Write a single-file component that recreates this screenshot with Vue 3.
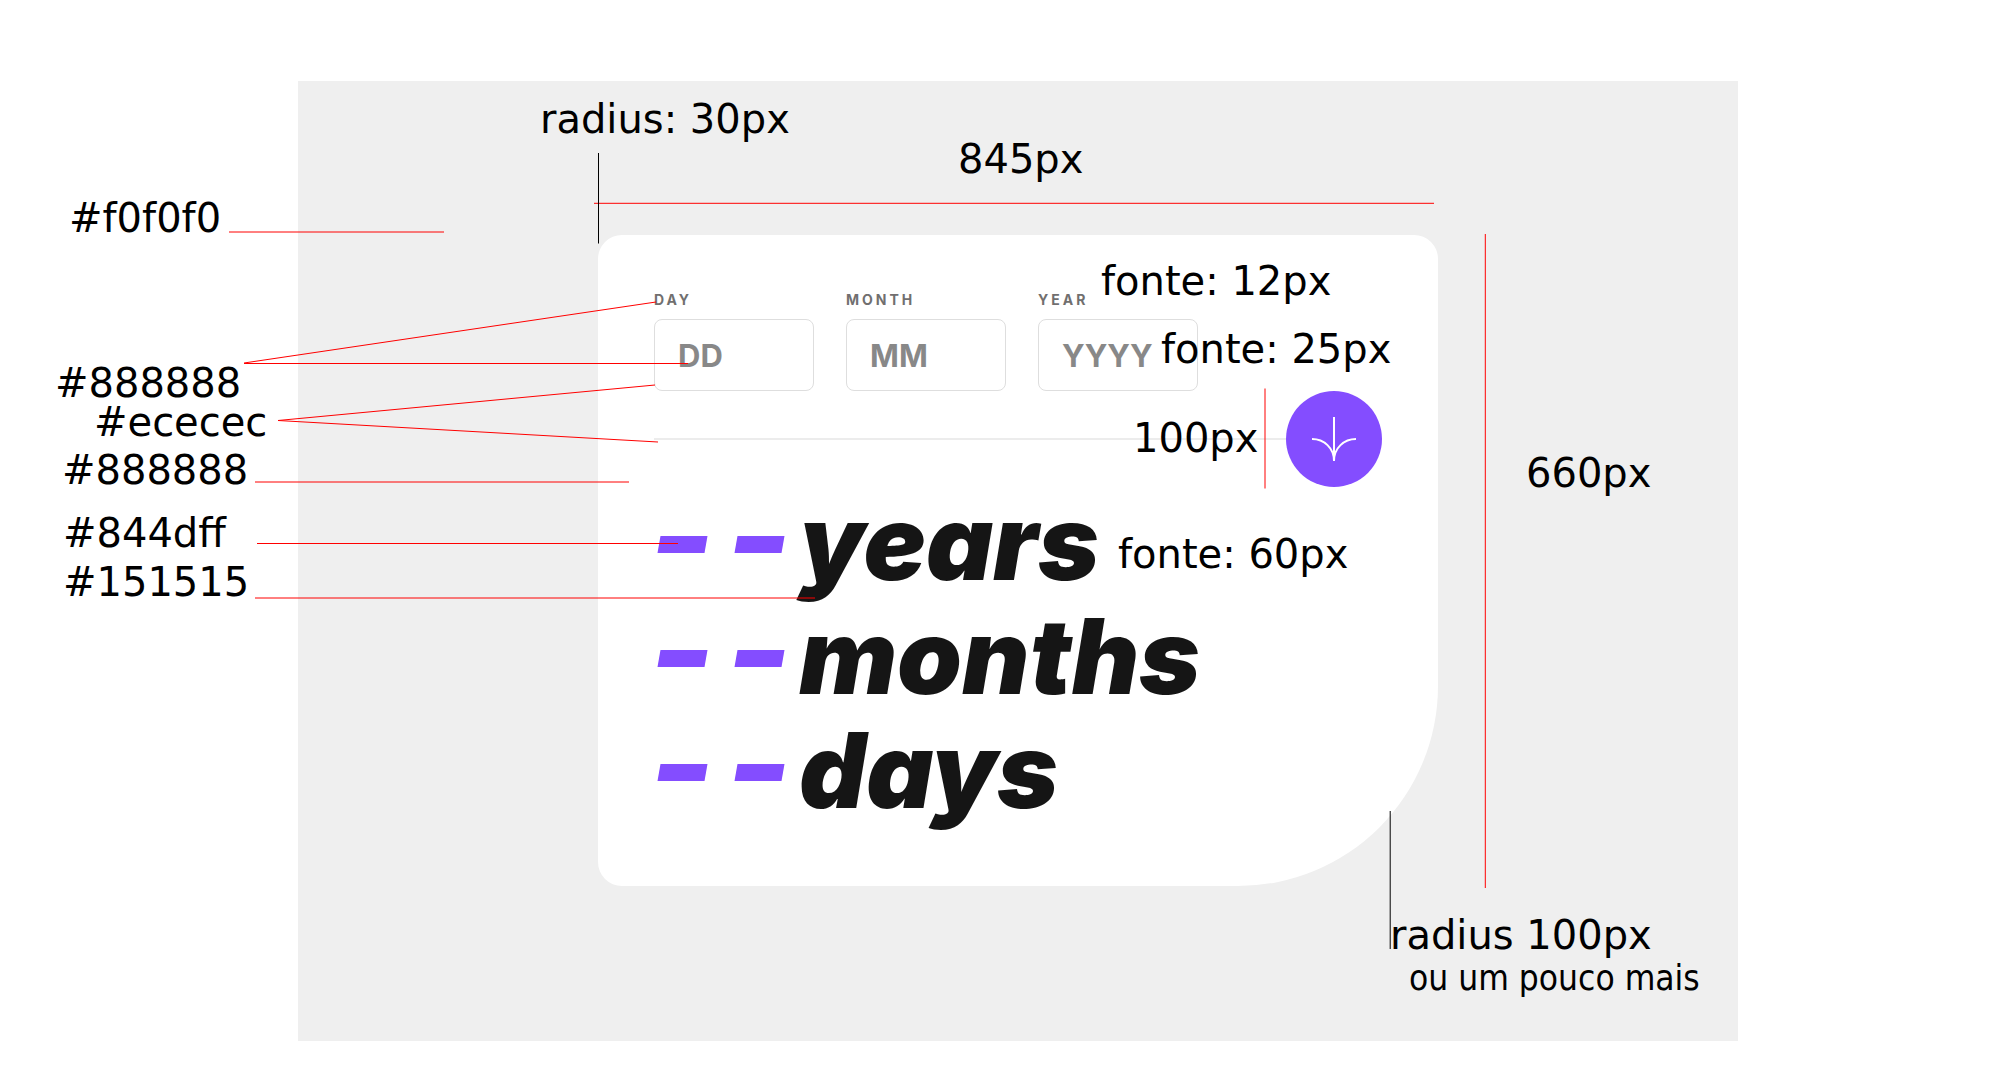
<script setup>
import { ref } from 'vue'

const fields = ref([
  { id: 'day', label: 'DAY', hint: 'DD', value: '' },
  { id: 'month', label: 'MONTH', hint: 'MM', value: '' },
  { id: 'year', label: 'YEAR', hint: 'YYYY', value: '' }
])

const units = ['years', 'months', 'days']

// Coordinates are measured from the card's top left corner.
const rules = [
  { x1: -369, y1: -3, x2: -154, y2: -3 },
  { x1: -354, y1: 128, x2: 58, y2: 67 },
  { x1: -354, y1: 128.5, x2: 90, y2: 128.5 },
  { x1: -320, y1: 185.5, x2: 57, y2: 150 },
  { x1: -320, y1: 185.5, x2: 60, y2: 207 },
  { x1: -343, y1: 247, x2: 31, y2: 247 },
  { x1: -341, y1: 308.5, x2: 80, y2: 308.5 },
  { x1: -343, y1: 363, x2: 217, y2: 363 },
  { x1: -4, y1: -31.7, x2: 836, y2: -31.7 },
  { x1: 887.3, y1: -1, x2: 887.3, y2: 653 },
  { x1: 667, y1: 153.5, x2: 667, y2: 253.5 },
  { x1: 0.5, y1: -82, x2: 0.5, y2: 8.5, dark: true },
  { x1: 792.2, y1: 576, x2: 792.2, y2: 714, dark: true }
]

const notes = [
  { x: -529, y: -3, text: '#f0f0f0' },
  { x: -543, y: 162, text: '#888888' },
  { x: -504, y: 201, text: '#ececec' },
  { x: -536, y: 249, text: '#888888' },
  { x: -535, y: 312, text: '#844dff' },
  { x: -535, y: 361, text: '#151515' },
  { x: -58, y: -102, text: 'radius: 30px' },
  { x: 360, y: -62, text: '845px' },
  { x: 503, y: 60, text: 'fonte: 12px' },
  { x: 563, y: 128, text: 'fonte: 25px' },
  { x: 535, y: 217, text: '100px' },
  { x: 928, y: 252, text: '660px' },
  { x: 520, y: 333, text: 'fonte: 60px' },
  { x: 792, y: 714, text: 'radius 100px' },
  { x: 811, y: 755, text: 'ou um pouco mais', narrow: true }
]
</script>

<template>
  <main class="page">
    <section class="artboard">
      <div class="card">
        <form @submit.prevent>
          <div class="fields">
            <div v-for="f in fields" :key="f.id" class="field">
              <label :for="f.id">{{ f.label }}</label>
              <input :id="f.id" v-model="f.value" type="text" inputmode="numeric" :placeholder="f.hint" />
            </div>
          </div>
          <div class="divider">
            <span class="line"></span>
            <button type="submit" aria-label="Calculate age">
              <svg width="46" height="46" viewBox="0 0 46 46" fill="none" stroke="#fff" stroke-width="2">
                <path d="M23 1v44M1 23c12 0 22 9 22 22 0-13 10-22 22-22" />
              </svg>
            </button>
          </div>
        </form>

        <div class="results">
          <p v-for="u in units" :key="u">
            <span class="dash"></span><span class="dash"></span><span class="unit">{{ u }}</span>
          </p>
        </div>

        <svg class="notes" width="1" height="1">
          <line
            v-for="(r, i) in rules"
            :key="i"
            :x1="r.x1"
            :y1="r.y1"
            :x2="r.x2"
            :y2="r.y2"
            :class="{ dark: r.dark }"
          />
          <text v-for="(n, i) in notes" :key="i" :x="n.x" :y="n.y" :class="{ narrow: n.narrow }">{{ n.text }}</text>
        </svg>
      </div>
    </section>
  </main>
</template>

<style>
body {
  margin: 0;
  background: #fff;
}
</style>

<style scoped>
.page {
  padding: 81px 275px 46px 298px;
}
.artboard {
  display: flex;
  justify-content: center;
  align-items: flex-start;
  box-sizing: border-box;
  min-height: 960px;
  padding: 154px 0;
  background: #efefef;
}
.card {
  position: relative;
  box-sizing: border-box;
  width: 100%;
  max-width: 840px;
  min-height: 651px;
  padding: 54px 56px 57px;
  border-radius: 24px 24px 200px 24px;
  background: #fff;
  font-family: Inter, "Liberation Sans", sans-serif;
}
.fields {
  display: flex;
  gap: 32px;
}
.field {
  display: flex;
  flex-direction: column;
  gap: 9px;
  width: 160px;
}
label {
  color: #716f6f;
  font-size: 14px;
  font-weight: 700;
  line-height: 21px;
  letter-spacing: 3px;
}
input {
  box-sizing: border-box;
  width: 100%;
  height: 72px;
  padding: 0 23px;
  border: 1px solid #dedede;
  border-radius: 8px;
  background: #fff;
  color: #151515;
  font-family: inherit;
  font-size: 31px;
  font-weight: 700;
}
input::placeholder {
  color: #888;
  opacity: 1;
}
.divider {
  display: flex;
  align-items: center;
}
.line {
  flex: 1;
  height: 2px;
  background: #ececec;
}
button {
  display: flex;
  align-items: center;
  justify-content: center;
  width: 96px;
  height: 96px;
  padding: 0;
  border: 0;
  border-radius: 50%;
  background: #844dff;
  cursor: pointer;
}
.results {
  margin-top: -2px;
  color: #151515;
  font-size: 104px;
  font-style: italic;
  font-weight: 900;
  line-height: 114px;
  font-feature-settings: "cv11";
}
.results p {
  display: flex;
  align-items: center;
  gap: 30px;
  margin: 0;
  padding-left: 5px;
}
.dash {
  width: 47px;
  height: 17px;
  margin-top: 4px;
  background: #844dff;
  transform: skewX(-10deg);
}
.unit {
  margin-left: -14px;
}
.notes {
  position: absolute;
  top: 0;
  left: 0;
  overflow: visible;
  pointer-events: none;
}
.notes line {
  stroke: #f00;
  stroke-width: 1px;
}
.notes .dark {
  stroke: #000;
}
.notes text {
  fill: #000;
  font-family: "DejaVu Sans", sans-serif;
  font-size: 40px;
}
.notes .narrow {
  font-family: "DejaVu Sans Condensed", "DejaVu Sans", sans-serif;
  font-size: 35px;
}
</style>
